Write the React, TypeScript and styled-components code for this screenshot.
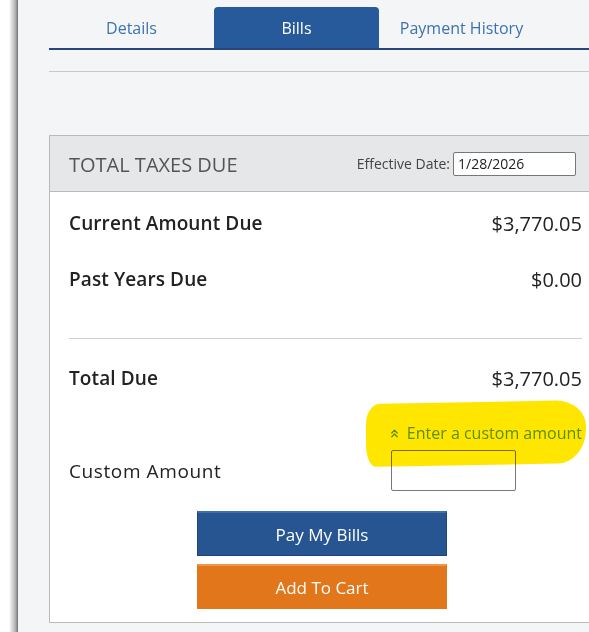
import React from "react";
import styled, { createGlobalStyle } from "styled-components";
import { ChevronsUp } from "lucide-react";

const GlobalStyle = createGlobalStyle`
    html, body {
        margin: 0;
        padding: 0;
        background: #ffffff;
        font-family: "Open Sans", "Noto Sans", sans-serif;
        overflow: hidden;
    }
`

const Page = styled.div`
    display: flex;
    flex-direction: row;
    min-height: 632px;
    overflow: hidden;
`

const Edge = styled.div`
    width: 18px;
    flex-shrink: 0;
    background: linear-gradient(to right, #ffffff 0px, #ffffff 9px, #e4e4e4 11px, #b8b8b8 15px, #8c8c8c 17px, #6e6e6e 18px);
`

const Main = styled.div`
    flex: 1;
    min-width: 0;
    overflow: hidden;
    background: #f4f5f7;
    padding-left: 31px;
`

const Tabs = styled.div`
    display: flex;
    flex-direction: row;
    margin-top: 7px;
    border-bottom: 2px solid #26477a;
`

const Tab = styled.div<{ active?: boolean }>`
    width: 165px;
    height: 41px;
    display: flex;
    align-items: center;
    justify-content: center;
    font-size: 16px;
    border-radius: 4px 4px 0 0;
    color: ${p => (p.active ? "#ffffff" : "#3d73ad")};
    background: ${p => (p.active ? "#265a9a" : "transparent")};
`

const Rule = styled.div`
    margin-top: 21px;
    height: 1px;
    background: #c8c9cb;
`

const Box = styled.div`
    margin-top: 63px;
    width: 546px;
    border: 1px solid #b9babc;
    background: #ffffff;
`

const Header = styled.div`
    height: 55px;
    display: flex;
    align-items: center;
    justify-content: space-between;
    padding: 0 20px 0 19px;
    background: #e6e7e9;
    border-bottom: 1px solid #b9babc;
`

const Title = styled.div`
    font-size: 20px;
    color: #555555;
    padding-top: 1px;
`

const DateField = styled.label`
    display: flex;
    align-items: center;
    gap: 3px;
    font-size: 14px;
    color: #444444;
`

const DateInput = styled.input`
    width: 113px;
    height: 22px;
    padding: 0 4px;
    border: 1px solid #777777;
    border-radius: 2px;
    font-family: inherit;
    font-size: 14px;
    color: #222222;
    outline: none;
`

const Body = styled.div`
    padding: 3px 14px 13px 19px;
    position: relative;
`

const Row = styled.div`
    height: 56px;
    display: flex;
    align-items: center;
    justify-content: space-between;
    font-size: 19px;
    color: #222222;
`

const Label = styled.span`
    font-weight: 600;
    letter-spacing: 0.1px;
`

const Amount = styled.span`
    font-size: 20px;
`

const Divider = styled.div`
    margin: 31px 0 11px;
    height: 1px;
    background: #cfcfcf;
`

const LinkRow = styled.div`
    margin-top: 17px;
    height: 20px;
    display: flex;
    align-items: center;
    justify-content: flex-end;
    gap: 6px;
    font-size: 16px;
    color: #5c9e1c;
`

const Highlight = styled.div`
    position: absolute;
    left: 316px;
    top: 210px;
    width: 220px;
    height: 63px;
    background: #ffe600;
    mix-blend-mode: multiply;
    border-radius: 14px 30px 28px 10px / 20px 26px 34px 22px;
    transform: skewY(-1deg);
    pointer-events: none;
`

const CustomRow = styled.div`
    margin-top: 7px;
    display: grid;
    grid-template-columns: 322px 125px;
    align-items: center;
`

const CustomLabel = styled.span`
    font-size: 19px;
    letter-spacing: 0.6px;
    color: #222222;
`

const AmountInput = styled.input`
    box-sizing: border-box;
    width: 125px;
    height: 41px;
    border: 1px solid #777777;
    border-radius: 2px;
    background: transparent;
    outline: none;
`

const Buttons = styled.div`
    margin-top: 20px;
    display: flex;
    flex-direction: column;
    align-items: center;
    gap: 8px;
    padding-right: 7px;
`

const ActionButton = styled.button<{ color: string; edge: string; shine: string }>`
    width: 250px;
    height: 45px;
    border: 1px solid ${p => p.edge};
    border-top: 2px solid ${p => p.shine};
    background: ${p => p.color};
    color: #ffffff;
    font-family: inherit;
    font-size: 17px;
    cursor: pointer;
`

const App = () => {
    return (
        <>
            <GlobalStyle />
            <Page>
                <Edge />
                <Main>
                    <Tabs>
                        <Tab>Details</Tab>
                        <Tab active>Bills</Tab>
                        <Tab>Payment History</Tab>
                    </Tabs>
                    <Rule />
                    <Box>
                        <Header>
                            <Title>TOTAL TAXES DUE</Title>
                            <DateField>
                                Effective Date:
                                <DateInput defaultValue="1/28/2026" />
                            </DateField>
                        </Header>
                        <Body>
                            <Row>
                                <Label>Current Amount Due</Label>
                                <Amount>$3,770.05</Amount>
                            </Row>
                            <Row>
                                <Label>Past Years Due</Label>
                                <Amount>$0.00</Amount>
                            </Row>
                            <Divider />
                            <Row>
                                <Label>Total Due</Label>
                                <Amount>$3,770.05</Amount>
                            </Row>
                            <LinkRow>
                                <ChevronsUp size={13} strokeWidth={2.5} />
                                Enter a custom amount
                            </LinkRow>
                            <CustomRow>
                                <CustomLabel>Custom Amount</CustomLabel>
                                <AmountInput />
                            </CustomRow>
                            <Buttons>
                                <ActionButton color="#265592" edge="#1d457c" shine="#3a6fb0">
                                    Pay My Bills
                                </ActionButton>
                                <ActionButton color="#e2761b" edge="#e2761b" shine="#f0964a">
                                    Add To Cart
                                </ActionButton>
                            </Buttons>
                            <Highlight />
                        </Body>
                    </Box>
                </Main>
            </Page>
        </>
    );
};

export default App;
